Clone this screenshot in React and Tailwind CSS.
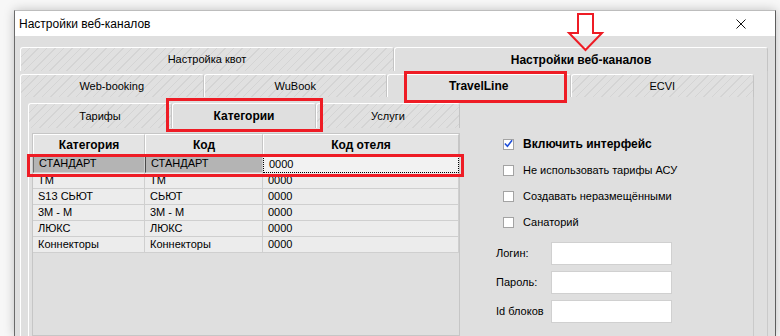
import React from "react";

// hatched background of the inactive tabs
const hatch =
  "bg-[image:repeating-linear-gradient(135deg,#d4d4d4_0px,#d4d4d4_1px,#e0e0e0_1px,#e0e0e0_6px)]";

const Tab = ({ label, active, className = "" }) => (
  <div
    className={`flex items-center justify-center rounded-t-[3px] border-t border-l border-r border-t-white border-l-white border-r-[#c4c4c4] text-black ${
      active ? "bg-[#dfdfdf] font-bold text-[12px]" : `${hatch} text-[11px]`
    } ${className}`}
  >
    {label}
  </div>
);

const rows = [
  ["СТАНДАРТ", "СТАНДАРТ", "0000"],
  ["ТМ", "ТМ", "0000"],
  ["S13 СЬЮТ", "СЬЮТ", "0000"],
  ["3М - М", "3М - М", "0000"],
  ["ЛЮКС", "ЛЮКС", "0000"],
  ["Коннекторы", "Коннекторы", "0000"],
];

const checks = [
  { label: "Включить интерфейс", checked: true },
  { label: "Не использовать тарифы АСУ" },
  { label: "Создавать неразмещёнными" },
  { label: "Санаторий" },
];

const App = () => {
  return (
    <div className="relative w-[780px] h-[336px] overflow-hidden bg-[#f7f7f7] pt-[10px] pl-[14px] font-['Liberation_Sans',Arial,sans-serif]">
      {/* Window */}
      <div className="w-[762px] h-[326px] flex flex-col border-l border-r border-t border-l-[#6a6a6a] border-r-[#5e5e5e] border-t-[#bdbdbd] shadow-[0_0_10px_rgba(0,0,0,0.22)]">
        {/* Title bar */}
        <div className="h-[25px] shrink-0 bg-white flex items-center justify-between pl-[4px] pr-[29px]">
          <span className="text-[12px] text-black">Настройки веб-каналов</span>
          <svg width="10" height="10" viewBox="0 0 10 10">
            <path d="M0.5 0.5 L9.5 9.5 M9.5 0.5 L0.5 9.5" stroke="#111" strokeWidth="1" />
          </svg>
        </div>

        {/* Body */}
        <div className="flex-1 min-h-0 flex flex-col bg-[#dfdfdf] pl-[5px] pr-[7px] pt-[11px]">
          {/* Row 1 */}
          <div className="flex h-[24px] shrink-0">
            <Tab label="Настройка квот" className="w-[374px]" />
            <Tab label="Настройки веб-каналов" active className="flex-1" />
          </div>

          <div className="flex-1 min-h-0 flex flex-col pt-[3px] pr-[13px] border-r border-[#cacaca]">
            {/* Row 2 */}
            <div className="grid grid-cols-4 h-[23px] shrink-0">
              <Tab label="Web-booking" />
              <Tab label="WuBook" />
              <Tab label="TravelLine" active />
              <Tab label="ECVI" />
            </div>

            {/* Channel panel */}
            <div className="flex-1 min-h-0 flex border-l border-r border-l-white border-r-[#cacaca] pl-[7px] pt-[6px]">
              {/* Left column */}
              <div className="w-[432px] flex flex-col">
                <div className="grid grid-cols-3 h-[25px] shrink-0">
                  <Tab label="Тарифы" />
                  <Tab label="Категории" active />
                  <Tab label="Услуги" />
                </div>
                <div className="flex-1 min-h-0 flex border-l border-white pl-[3px] pt-[5px]">
                  {/* Table */}
                  <div className="flex-1 flex flex-col border border-[#c6c6c6] bg-[#dfdfdf] text-[11px] text-black">
                    <div className="grid grid-cols-[112px_118px_1fr] h-[22px] shrink-0 font-bold text-[12px]">
                      {["Категория", "Код", "Код отеля"].map((h) => (
                        <div
                          key={h}
                          className="flex items-center justify-center bg-[#e4e4e4] border-t border-l border-t-white border-l-white border-r border-b border-r-[#c6c6c6] border-b-[#c6c6c6]"
                        >
                          {h}
                        </div>
                      ))}
                    </div>
                    {rows.map((r, i) => {
                      const sel = i === 0;
                      return (
                        <div
                          key={i}
                          className={`grid grid-cols-[112px_118px_1fr] ${sel ? "h-[17px]" : "h-[16px]"}`}
                        >
                          <div
                            className={`pl-[5px] leading-[15px] border-b border-r border-[#cfcfcf] ${
                              sel ? "bg-[#b4b4b4] border-l border-l-[#6e6e6e]" : "bg-[#ececec]"
                            }`}
                          >
                            {r[0]}
                          </div>
                          <div
                            className={`pl-[5px] leading-[15px] border-b border-r border-[#cfcfcf] ${
                              sel ? "bg-[#b4b4b4] border-l border-l-[#4a4a4a]" : "bg-[#ececec]"
                            }`}
                          >
                            {r[1]}
                          </div>
                          <div
                            className={`pl-[5px] leading-[14px] ${
                              sel
                                ? "bg-[#f2f2f2] border border-dotted border-black"
                                : "bg-[#ececec] border-b border-r border-[#cfcfcf]"
                            }`}
                          >
                            {r[2]}
                          </div>
                        </div>
                      );
                    })}
                  </div>
                </div>
              </div>

              {/* Right column */}
              <div className="flex-1 flex flex-col pt-[28px] text-[11px] text-black">
                {checks.map((c) => (
                  <div key={c.label} className="h-[26px] flex items-center gap-[9px] pl-[43px]">
                    <div className="w-[11px] h-[11px] bg-white border border-[#a3a3a3] flex items-center justify-center">
                      {c.checked && (
                        <svg width="10" height="9" viewBox="0 0 10 9" className="mt-[-1px]">
                          <path d="M1 4.5 L3.8 7.5 L9 1" stroke="#1f4fd8" strokeWidth="1.8" fill="none" />
                        </svg>
                      )}
                    </div>
                    <span className={c.checked ? "font-bold text-[12px]" : ""}>{c.label}</span>
                  </div>
                ))}
                <div className="flex flex-col gap-[6px] mt-[7px] pl-[36px]">
                  {["Логин:", "Пароль:", "Id блоков"].map((l) => (
                    <div key={l} className="flex items-center">
                      <span className="w-[55px]">{l}</span>
                      <div className="w-[121px] h-[23px] bg-white border border-[#d0d0d0]" />
                    </div>
                  ))}
                </div>
              </div>
            </div>
          </div>
        </div>
      </div>

      {/* Red annotations */}
      <svg className="absolute left-0 top-0 pointer-events-none" width="780" height="336">
        <polygon
          points="578,14 593,14 593,33 602,33 585.5,50 569,33 578,33"
          fill="none"
          stroke="#ee1c25"
          strokeWidth="2"
        />
      </svg>
      <div className="absolute left-[404px] top-[71px] w-[163px] h-[32px] border-[3px] border-[#ee1c25]" />
      <div className="absolute left-[166px] top-[98px] w-[157px] h-[34px] border-[3px] border-[#ee1c25]" />
      <div className="absolute left-[27px] top-[154px] w-[437px] h-[23px] border-[3px] border-[#ee1c25]" />
    </div>
  );
};

export default App;
